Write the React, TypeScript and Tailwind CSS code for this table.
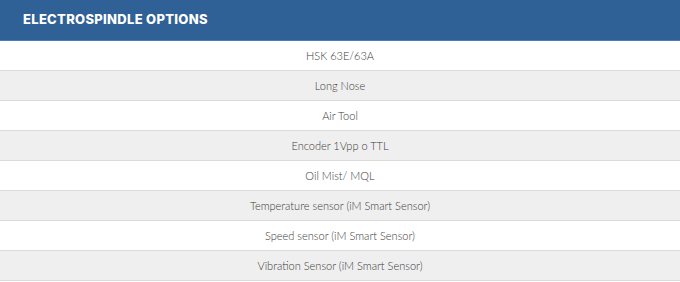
import React from "react";

const rows = [
  "HSK 63E/63A",
  "Long Nose",
  "Air Tool",
  "Encoder 1Vpp o TTL",
  "Oil Mist/ MQL",
  "Temperature sensor (iM Smart Sensor)",
  "Speed sensor (iM Smart Sensor)",
  "Vibration Sensor (iM Smart Sensor)",
];

export default function App() {
  return (
    <div className="w-[680px] h-[282px] bg-white overflow-hidden">
      <div className="h-[40px] bg-[#2f6196] border-b border-[#4a7fb5] flex items-center pl-[23px] box-content">
        <span className="text-white font-extrabold text-[13px] tracking-[0.3px] [font-family:Inter,'Open_Sans',sans-serif]">
          ELECTROSPINDLE OPTIONS
        </span>
      </div>
      {rows.map((r, i) => (
        <div
          key={r}
          className={`h-[30px] border-b border-[#dcdbdb] flex items-center justify-center pt-[1px] text-[11px] text-[#3a3a3a] font-light [font-family:Lato,sans-serif] ${
            i % 2 === 0 ? "bg-white" : "bg-[#f0efef]"
          }`}
        >
          {r}
        </div>
      ))}
    </div>
  );
}
